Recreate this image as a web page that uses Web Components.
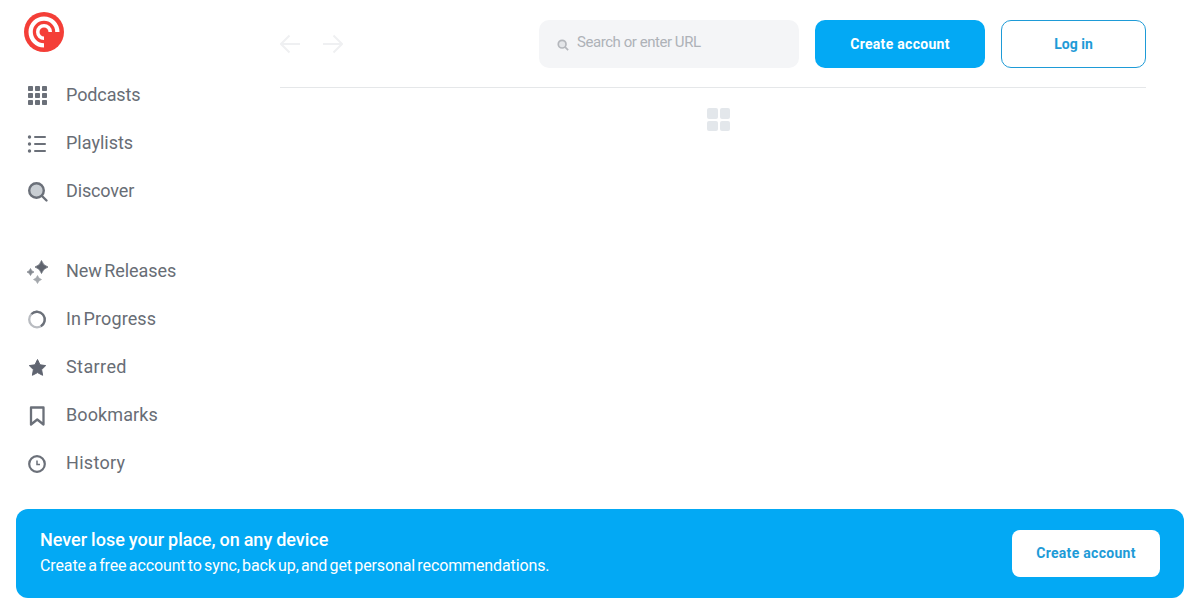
<!DOCTYPE html>
<html>
<head>
<meta charset="utf-8">
<title>Pocket Casts</title>
<style>
  html, body { margin: 0; height: 600px; overflow: hidden; background: #fff; font-family: Roboto, sans-serif; }
</style>
</head>
<body>
<app-shell>
  <side-nav slot="side">
    <nav-item label="Podcasts" style="--track:-.1px"><svg viewBox="0 0 24 24" fill="#6b7079"><rect x="3" y="3" width="5" height="5" rx=".8"/><rect x="10" y="3" width="5" height="5" rx=".8"/><rect x="17" y="3" width="5" height="5" rx=".8"/><rect x="3" y="10" width="5" height="5" rx=".8"/><rect x="10" y="10" width="5" height="5" rx=".8"/><rect x="17" y="10" width="5" height="5" rx=".8"/><rect x="3" y="17" width="5" height="5" rx=".8"/><rect x="10" y="17" width="5" height="5" rx=".8"/><rect x="17" y="17" width="5" height="5" rx=".8"/></svg></nav-item>
    <nav-item label="Playlists"><svg viewBox="0 0 24 24" fill="#6b7079"><circle cx="4.500" cy="6" r="1.700"/><circle cx="4.500" cy="13" r="1.700"/><circle cx="4.500" cy="20" r="1.700"/><rect x="9" y="5" width="12" height="2" rx="1"/><rect x="9" y="12" width="12" height="2" rx="1"/><rect x="9" y="19" width="12" height="2" rx="1"/></svg></nav-item>
    <nav-item label="Discover" style="--track:-.15px"><svg viewBox="0 0 24 24"><circle cx="11.500" cy="11.500" r="7.300" fill="#c9ced3" stroke="#6b7079" stroke-width="2.400"/><path d="M17 17l4.500 4.500" stroke="#6b7079" stroke-width="2.400" stroke-linecap="round"/></svg></nav-item>
    <div style="height:32px"></div>
    <nav-item label="New Releases" style="--track:-.05px"><svg viewBox="0 0 24 24" stroke-width=".7" stroke-linejoin="round"><path d="M16.500 1.500Q18 6.500 23 8 18 9.500 16.500 14.500 15 9.500 10 8 15 6.500 16.500 1.500z" fill="#5f646e" stroke="#5f646e"/><path d="M5.500 9.500Q6.300 12.200 9 13 6.300 13.800 5.500 16.500 4.700 13.800 2 13 4.700 12.200 5.500 9.500z" fill="#858a91" stroke="#858a91"/><path d="M12.500 16.500Q13.400 19.600 16.500 20.500 13.400 21.400 12.500 24.500 11.600 21.400 8.500 20.500 11.600 19.600 12.500 16.500z" fill="#a3a7ac" stroke="#a3a7ac"/></svg></nav-item>
    <nav-item label="In Progress" style="--track:.1px"><svg viewBox="0 0 24 24" fill="none" stroke-width="2.300"><circle cx="12" cy="12.500" r="7.800" stroke="#b9bcc1"/><path d="M6.500 7a7.800 7.800 0 1 1 9.400 12.300" stroke="#6b7079"/></svg></nav-item>
    <nav-item label="Starred" style="--track:.4px"><svg viewBox="0 0 24 24" fill="#5f6470"><path d="M12.500 4.500l2.500 5.300 5.700.8-4.100 4 1 5.700-5.100-2.700-5.100 2.700 1-5.700-4.100-4 5.700-.8z" stroke="#5f6470" stroke-width="1" stroke-linejoin="round"/></svg></nav-item>
    <nav-item label="Bookmarks" style="--track:.1px"><svg viewBox="0 0 24 24" fill="none" stroke="#6b7079" stroke-width="2.300" stroke-linejoin="round"><path d="M6 4.500h12.500v17l-6.250-5-6.250 5z"/></svg></nav-item>
    <nav-item label="History" style="--track:.3px"><svg viewBox="0 0 24 24" fill="none" stroke="#6b7079" stroke-width="2.200"><circle cx="12" cy="13" r="7.800"/><path d="M12 9.500v4h3" stroke-width="1.500"/></svg></nav-item>
  </side-nav>
  <top-bar slot="main"></top-bar>
  <loading-grid slot="main"></loading-grid>
  <signup-banner slot="banner"></signup-banner>
</app-shell>

<script>
customElements.define('app-shell', class AppShell extends HTMLElement {
  constructor() {
    super();
    this.attachShadow({mode: 'open'})
    this.shadowRoot.innerHTML = `<style>
    :host { display: flex; flex-direction: column; height: 600px; box-sizing: border-box; padding: 0 16px 2px; }
    .top { flex: 1; min-height: 0; display: flex; margin: 0 -16px; }
    .side { width: 280px; flex: none; }
    .main { flex: 1; min-width: 0; padding-right: 54px; }
    </style>
    <div class="top">
      <div class="side"><slot name="side"></slot></div>
      <div class="main"><slot name="main"></slot></div>
    </div>
    <slot name="banner"></slot>`
  }
});

customElements.define('side-nav', class SideNav extends HTMLElement {
  constructor() {
    super();
    this.attachShadow({mode: 'open'})
    this.shadowRoot.innerHTML = `<style>
    :host { display: block; padding: 12px 0 0 24px; }
    .logo { display: block; width: 40px; height: 40px; margin-bottom: 19px; }
    </style>
    <svg class="logo" viewBox="0 0 40 40">
      <circle cx="20" cy="20" r="20" fill="#f43e37"/>
      <path d="M20 35.500A15.500 15.500 0 1 1 35.500 20h-4.300A11.200 11.200 0 1 0 20 31.200z" fill="#fff"/>
      <path d="M20 28A8 8 0 1 1 28 20h-3.500A4.500 4.500 0 1 0 20 24.500z" fill="#fff"/>
    </svg>
    <slot></slot>`
  }
});

customElements.define('nav-item', class NavItem extends HTMLElement {
  constructor() {
    super();
    this.attachShadow({mode: 'open'})
    this.shadowRoot.innerHTML = `<style>
    :host { display: flex; align-items: center; height: 48px; gap: 17px; color: #686d75; font-size: 18px; }
    .icon { width: 24px; height: 24px; flex: none; display: block; margin-left: 1px; }
    ::slotted(svg) { width: 24px; height: 24px; display: block; overflow: visible; }
    .label { padding-bottom: 2px; word-spacing: -2px; letter-spacing: var(--track, 0); }
    </style>
    <span class="icon"><slot></slot></span><span class="label">${this.getAttribute('label')}</span>`
  }
});

customElements.define('top-bar', class TopBar extends HTMLElement {
  constructor() {
    super();
    this.attachShadow({mode: 'open'})
    this.shadowRoot.innerHTML = `<style>
    * { box-sizing: border-box; }
    :host { display: flex; align-items: center; height: 88px; border-bottom: 1px solid #e5e7e9; box-sizing: border-box; font-size: 14px; }
    .arrows { display: flex; gap: 23px; flex: 1; }
    .arrows svg { width: 20px; height: 20px; display: block; }
    .search { width: 260px; height: 48px; border-radius: 10px; background: #f4f5f7; display: flex; align-items: center; gap: 8px; padding: 0 0 4px 18px; color: #aeb2b8; font-size: 15px; letter-spacing: -.45px; margin-right: 16px; }
    .search svg { width: 12px; height: 12px; flex: none; margin-top: 6px; }
    .btn { height: 48px; border-radius: 10px; display: flex; align-items: center; justify-content: center; font-weight: 700; }
    .create { width: 170px; background: #03a9f4; color: #fff; margin-right: 16px; letter-spacing: .3px; }
    .login { width: 145px; border: 1px solid #1e9bd7; color: #1e9bd7; }
    </style>
    <div class="arrows">
      <svg viewBox="0 0 20 20" fill="none" stroke="#eff0f2" stroke-width="2"><path d="M20 10H2M9.500 1.500 1 10l8.500 8.500"/></svg>
      <svg viewBox="0 0 20 20" fill="none" stroke="#eff0f2" stroke-width="2"><path d="M0 10h18M10.500 1.500 19 10l-8.500 8.500"/></svg>
    </div>
    <div class="search">
      <svg viewBox="0 0 14 14" fill="none" stroke="#b4b7bc" stroke-width="2"><circle cx="6" cy="6" r="4.500" fill="#e4e6e9"/><path d="M9.500 9.500 13 13"/></svg>
      <span>Search or enter URL</span>
    </div>
    <div class="btn create">Create account</div>
    <div class="btn login">Log in</div>`
  }
});

customElements.define('loading-grid', class LoadingGrid extends HTMLElement {
  constructor() {
    super();
    this.attachShadow({mode: 'open'})
    this.shadowRoot.innerHTML = `<style>
    :host { display: flex; justify-content: center; padding: 20px 0 0 11px; }
    .grid { display: grid; grid-template-columns: 10.5px 10.5px; grid-auto-rows: 10.5px; gap: 2px; }
    .grid i { background: #e3e7eb; border-radius: 2px; }
    </style>
    <div class="grid"><i></i><i></i><i></i><i></i></div>`
  }
});

customElements.define('signup-banner', class SignupBanner extends HTMLElement {
  constructor() {
    super();
    this.attachShadow({mode: 'open'})
    this.shadowRoot.innerHTML = `<style>
    :host { display: flex; align-items: center; justify-content: space-between; height: 89px; box-sizing: border-box; padding: 0 24px; background: #03a9f4; border-radius: 12px; color: #fff; }
    h2 { margin: 0 0 2px; font-size: 18px; font-weight: 500; line-height: 24px; word-spacing: -.5px; }
    p { margin: 0; font-size: 16px; line-height: 24px; word-spacing: -1.5px; letter-spacing: -.12px; }
    .text { margin-top: -1px; }
    .btn { width: 148px; height: 47px; padding-bottom: 1px; box-sizing: border-box; background: #fff; color: #1e9bd7; border-radius: 8px; display: flex; align-items: center; justify-content: center; font-size: 14px; font-weight: 700; letter-spacing: .3px; }
    </style>
    <div class="text"><h2>Never lose your place, on any device</h2><p>Create a free account to sync, back up, and get personal recommendations.</p></div>
    <div class="btn">Create account</div>`
  }
});
</script>
</body>
</html>
